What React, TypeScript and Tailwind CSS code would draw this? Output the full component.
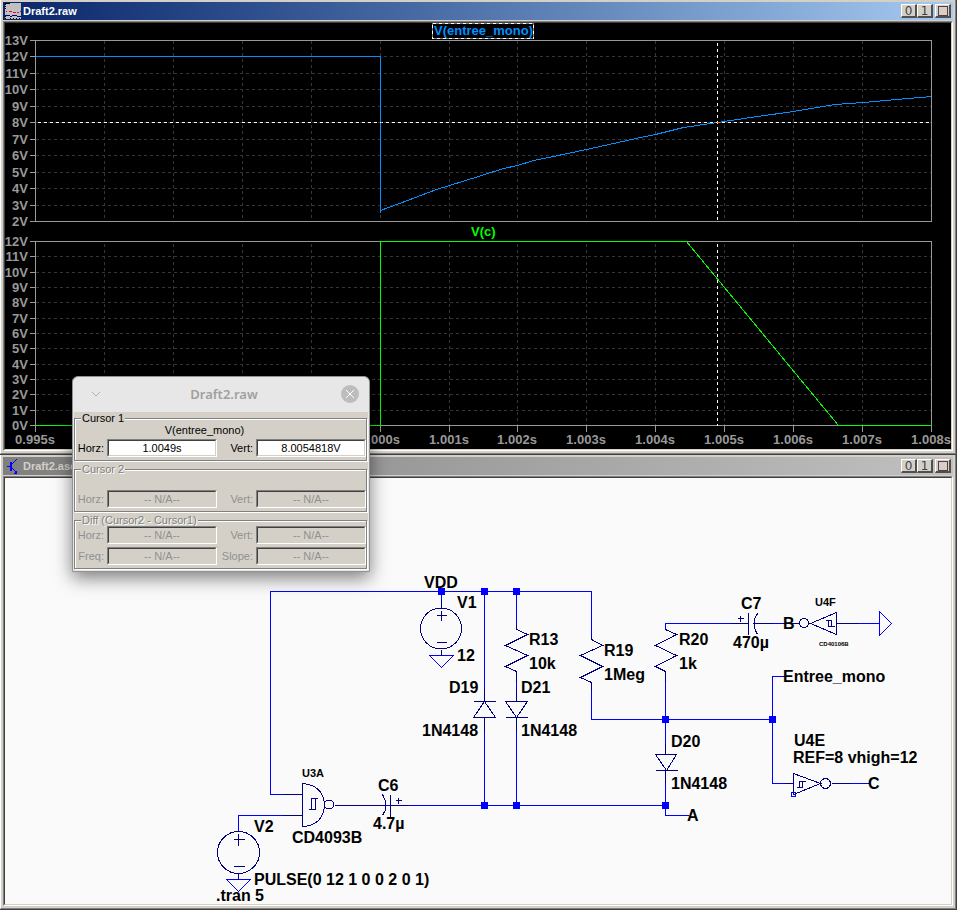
import type { ReactNode } from "react";

const TRACE = "#0090ff";
const AXIS = "#999999";
const GRID = "#363636";

const topTicks = [40, 56, 73, 89, 106, 122, 139, 155, 172, 188, 205, 221];
const bottomTicks = [241, 256, 272, 287, 302, 318, 333, 348, 364, 379, 394, 410, 425];
const timeTicks = [35, 104, 173, 242, 311, 380, 449, 517, 586, 655, 724, 793, 862, 931];

const tracePoints =
  "35,56 380,56 380,212 380,210 407,200 436,189 449,185 478,176 503,168 517,165 533,160 553,156 586,149 640,137 655,134 683,127 717,122 750,117 793,111 835,104 863,102 896,99 931,96";

function CaptionButton({ label, children }: { label: string; children: ReactNode }) {
  return (
    <button
      type="button"
      aria-label={label}
      className="flex h-[14px] w-4 items-center justify-center border-t border-r-2 border-b-2 border-l border-t-white border-r-[#505050] border-b-[#505050] border-l-white bg-[#d4d0c8] font-['DejaVu_Sans',sans-serif] text-[12px] leading-3 text-[#404040]"
    >
      {children}
    </button>
  );
}

function Window({
  title,
  active,
  icon,
  children,
}: {
  title: string;
  active: boolean;
  icon: ReactNode;
  children: ReactNode;
}) {
  return (
    <section className="border-r border-b border-[#404040]">
      <div className="border-r border-b border-l border-r-[#808080] border-b-[#808080] border-l-white bg-[#d4d0c8] p-0.5">
        <header
          className={
            active
              ? "flex h-[18px] items-center bg-linear-to-r from-[#0a246a] to-[#a6caf0] px-0.5 text-white"
              : "flex h-[18px] items-center bg-linear-to-r from-[#808080] to-[#c0c0c0] px-0.5 text-[#d4d0c8]"
          }
        >
          {icon}
          <h1 className="ml-0.5 flex-1 text-[11px] leading-4 font-bold">{title}</h1>
          <div className="flex">
            <CaptionButton label="Minimize">0</CaptionButton>
            <CaptionButton label="Maximize">1</CaptionButton>
            <div className="ml-0.5">
              <CaptionButton label="Close">
                <span className="block size-[10px] border border-[#603a3a]" />
              </CaptionButton>
            </div>
          </div>
        </header>
        <div className="mt-px border-t border-l border-r border-b border-t-[#808080] border-r-white border-b-white border-l-[#808080]">
          <div className="border border-t-[#404040] border-r-[#d4d0c8] border-b-[#d4d0c8] border-l-[#404040]">
            {children}
          </div>
        </div>
      </div>
    </section>
  );
}

function WaveIcon() {
  return (
    <svg viewBox="0 0 16 16" className="size-4" shapeRendering="crispEdges" aria-hidden="true">
      <rect width="16" height="16" fill="#c0c0c0" />
      <path d="M0 0h5v1H0zM0 1h1v1H0zM0 3h1v1H0zM0 5h1v1H0zM0 13h1v1H0zM0 15h1v1H0zM5 15h1v1H5zM8 15h1v1H8zM11 15h1v1h-1zM14 15h1v1h-1z" fill="#000" />
      <path d="M1 8h1v1H1zM4 8h3v1H4zM8 9h3v1H8zM12 9h2v1h-2zM15 8h1v1h-1z" fill="#f00" />
      <path d="M0 12h5v1H0zM5 13h2v1H5zM7 12h5v1H7zM12 13h4v1h-4z" fill="#000080" />
    </svg>
  );
}

function TransistorIcon() {
  return (
    <svg viewBox="0 0 16 16" className="size-4" shapeRendering="crispEdges" aria-hidden="true">
      <g fill="none" stroke="#0000ff">
        <path d="M2 8h4" />
        <path d="M6 4v9" strokeWidth="2" />
        <path d="M6 7l6-6M6 9l6 6" />
      </g>
      <path d="M12 16h-4l4-4z" fill="#0000ff" />
    </svg>
  );
}

function Waveforms() {
  return (
    <svg
      viewBox="5 23 946 426"
      className="block h-auto w-full bg-black font-['Liberation_Sans',Arial,sans-serif] text-[13px] font-bold"
      role="img"
      aria-label="Simulation waveforms"
    >
      <g transform="translate(0.5 0.5)" fill="none" shapeRendering="crispEdges">
        <g stroke={GRID} strokeDasharray="3 3">
          {topTicks.slice(1, -1).map((y) => (
            <path key={y} d={`M35 ${y}H931`} />
          ))}
          {bottomTicks.slice(1, -1).map((y) => (
            <path key={y} d={`M35 ${y}H931`} />
          ))}
          {timeTicks.slice(1, -1).map((x) => (
            <path key={x} d={`M${x} 40V221M${x} 243V425`} />
          ))}
        </g>
        <g stroke={AXIS}>
          <path d="M35 40H931V221H35ZM35 241H931V425H35Z" />
          {[...topTicks, ...bottomTicks].map((y) => (
            <path key={y} d={`M29 ${y}H35`} />
          ))}
          {timeTicks.map((x) => (
            <path key={x} d={`M${x} 425V431`} />
          ))}
        </g>
        <polyline points={tracePoints} stroke={TRACE} />
        <path d="M35 425H380V241H686L838 425H931" stroke="#00ff00" />
        <path d="M37 122H931M717 42V221M717 243V425" stroke="#ffffff" strokeDasharray="3 3" />
        <path d="M432 23H533V38H432Z" stroke="#808080" />
        <path d="M432 23H533V38H432Z" stroke="#ffffff" strokeDasharray="3 3" />
        <path d="M716 122h3M380 122h1" stroke="#ff6f00" />
      </g>
      <g fill={AXIS} textAnchor="end">
        {topTicks.map((y, i) => (
          <text key={y} x="28" y={y + 5}>{`${13 - i}V`}</text>
        ))}
        {bottomTicks.map((y, i) => (
          <text key={y} x="28" y={y + 5}>{`${12 - i}V`}</text>
        ))}
      </g>
      <g fill={AXIS} textAnchor="middle">
        {timeTicks.map((x, i) => (
          <text key={x} x={x} y="444">{`${((995 + i) / 1000).toFixed(3)}s`}</text>
        ))}
      </g>
      <text x="434" y="35" fill={TRACE}>V(entree_mono)</text>
      <text x="471" y="236" fill="#00ff00">V(c)</text>
    </svg>
  );
}

const labels: [number, number, string][] = [
  [424, 588, "VDD"],
  [457, 608, "V1"],
  [457, 661, "12"],
  [449, 693, "D19"],
  [422, 736, "1N4148"],
  [529, 645, "R13"],
  [529, 669, "10k"],
  [521, 693, "D21"],
  [521, 736, "1N4148"],
  [604, 656, "R19"],
  [604, 680, "1Meg"],
  [679, 645, "R20"],
  [679, 669, "1k"],
  [671, 747, "D20"],
  [671, 789, "1N4148"],
  [687, 821, "A"],
  [741, 609, "C7"],
  [733, 648, "470µ"],
  [783, 629, "B"],
  [783, 682, "Entree_mono"],
  [794, 746, "U4E"],
  [793, 763, "REF=8 vhigh=12"],
  [868, 789, "C"],
  [378, 791, "C6"],
  [373, 829, "4.7µ"],
  [292, 843, "CD4093B"],
  [254, 832, "V2"],
  [254, 885, "PULSE(0 12 1 0 0 2 0 1)"],
  [216, 901, ".tran 5"],
];

const junctions: [number, number][] = [
  [441, 591],
  [484, 591],
  [516, 591],
  [484, 805],
  [516, 805],
  [665, 805],
  [665, 719],
  [772, 719],
];

function Schematic() {
  return (
    <svg
      viewBox="5 478 946 426"
      className="block h-auto w-full bg-[#fafafa] font-['Liberation_Sans',Arial,sans-serif] text-[16px] font-bold"
      role="img"
      aria-label="Circuit schematic"
    >
      <g transform="translate(0.5 0.5)" fill="none" shapeRendering="crispEdges">
        <g stroke="#0000ff">
          <path d="M282 794H270V591H591V639M441 591V600M484 591V701M484 717V805M516 591V629M516 671V701M516 717V805" />
          <path d="M591 682V719H772M665 671V754M665 770V815H688M408 805H665" />
          <path d="M665 629V623H730M772 623H790M784 676H772V783H784M850 623H879M840 783H869" />
          <path d="M238 831V815H282M334 805H390" />
          <path d="M429 655H453L441 667ZM226 879H250L238 891ZM879 611V635L891 623Z" />
          <path d="M791 792H795V796H791Z" />
        </g>
        <g stroke="#000080">
          {/* Voltage sources */}
          <circle cx="440.5" cy="628" r="20.5" />
          <path d="M441 600V607M441 649V655M436 615H446M441 610V620M436 642H446" />
          <circle cx="238" cy="852" r="21" />
          <path d="M238 873V879M233 839H244M238 833V845M233 866H244" />
          {/* Resistors */}
          <path d="M516 624V629L527 634L505 645L527 655L505 666L516 671V681" />
          <path d="M591 635V639L602 645L580 655L602 666L580 677L591 682V690" />
          <path d="M665 629L676 634L655 645L676 655L655 666L665 671V681" />
          {/* Diodes */}
          <path d="M484 688V701M473 701H495M484 701L473 717H495ZM484 717V730" />
          <path d="M516 688V701M505 701H527L516 717ZM505 717H527M516 717V730" />
          <path d="M665 742V754M655 754H676L666 770ZM655 770H677M665 770V782" />
          {/* Capacitors */}
          <path d="M730 623H748M748 612V634M757 613Q750 623 757 634M754 623H772M737 618H743M740 615V621" />
          <path d="M356 805H385M382 794Q389 805 382 815M390 794V816M390 805H408M395 800H401M398 797V803" />
          {/* Schmitt NAND gate */}
          <path d="M282 794H302M282 815H302M302 783V826M302 783Q323 785 324 804Q323 825 302 826" />
          <circle cx="328.5" cy="804" r="4.5" />
          <path d="M308 809H315V798M311 809V798H317M334 805H356" />
          {/* Schmitt inverters */}
          <path d="M810 623L836 612V634ZM836 623H857M790 623H799M825 620H831V626M828 620V626H834" />
          <circle cx="803.5" cy="622.5" r="4.5" />
          <path d="M784 783H793M793 773V794L820 783ZM831 783H850M796 787H802V781M799 787V781H805" />
          <circle cx="825" cy="783" r="5" />
        </g>
        <g fill="#0000ff">
          {junctions.map(([x, y]) => (
            <rect key={`${x}-${y}`} x={x - 3.5} y={y - 3.5} width="7" height="7" />
          ))}
        </g>
      </g>
      <g fill="#000000">
        {labels.map(([x, y, text]) => (
          <text key={`${x}-${y}`} x={x} y={y}>
            {text}
          </text>
        ))}
        <g className="text-[11px]">
          <text x="302" y="777">U3A</text>
          <text x="815" y="606">U4F</text>
        </g>
        <text x="819" y="646" className="text-[6px]">CD40106B</text>
      </g>
    </svg>
  );
}

function Field({ id, label, value, disabled }: { id: string; label: string; value: string; disabled?: boolean }) {
  return (
    <div className="flex items-center gap-[3px]">
      <label
        htmlFor={id}
        className={
          disabled ? "min-w-[29px] text-right leading-3 text-[#909090]" : "min-w-[29px] text-right leading-3 text-black"
        }
      >
        {label}
      </label>
      <div className="border border-t-[#808080] border-r-white border-b-white border-l-[#808080]">
        <input
          id={id}
          readOnly
          disabled={disabled}
          defaultValue={value}
          className="block h-4 w-[108px] border border-t-[#404040] border-r-[#d4d0c8] border-b-[#d4d0c8] border-l-[#404040] bg-white text-center text-black outline-none disabled:bg-[#d4d0c8] disabled:text-[#909090]"
        />
      </div>
    </div>
  );
}

function Group({ title, disabled, children }: { title: string; disabled?: boolean; children: ReactNode }) {
  return (
    <fieldset className="min-w-0 border border-[#808080] pb-[3px] shadow-[1px_1px_0_#fff,inset_1px_1px_0_#fff]">
      <legend
        className={
          disabled
            ? "ml-1.5 bg-[#d4d0c8] px-px leading-3 text-[#808080] [text-shadow:1px_1px_0_#fff]"
            : "ml-1.5 bg-[#d4d0c8] px-px leading-3 text-black"
        }
      >
        {title}
      </legend>
      {children}
    </fieldset>
  );
}

function FieldRow({ children }: { children: ReactNode }) {
  return <div className="flex justify-between">{children}</div>;
}

function CursorDialog() {
  return (
    <div
      role="dialog"
      aria-label="Draft2.raw"
      className="absolute top-[376px] left-[72px] w-[298px] overflow-hidden rounded-t-md border border-[#929292] bg-[#e7e7e7] text-[11px] shadow-[0_6px_18px_rgba(0,0,0,0.5)]"
    >
      <header className="flex h-[35px] items-center pr-2.5 pb-px pl-[18px]">
        <button type="button" aria-label="Roll up" className="flex size-[10px] items-center justify-center">
          <svg viewBox="0 0 10 10" className="size-[10px]" fill="none" stroke="#b0b0b0" aria-hidden="true">
            <path d="M1 3l4 4 4-4" />
          </svg>
        </button>
        <h2 className="flex-1 pl-1.5 text-center font-['Noto_Sans',sans-serif] text-[13px] leading-4 font-semibold text-[#a0a0a0]">
          Draft2.raw
        </h2>
        <button type="button" aria-label="Close" className="size-[18px]">
          <svg viewBox="0 0 18 18" className="size-[18px]" aria-hidden="true">
            <circle cx="9" cy="9" r="9" fill="#bdbdbd" />
            <path d="M5 5l8 8M13 5l-8 8" stroke="#fff" />
          </svg>
        </button>
      </header>
      <div className="mx-px mb-px flex flex-col gap-0.5 bg-[#d4d0c8] pr-px pb-px">
        <Group title="Cursor 1">
          <p className="mb-[3px] pr-8 text-center leading-3 text-black">V(entree_mono)</p>
          <FieldRow>
            <Field id="c1-horz" label="Horz:" value="1.0049s" />
            <Field id="c1-vert" label="Vert:" value="8.0054818V" />
          </FieldRow>
        </Group>
        <Group title="Cursor 2" disabled>
          <div className="h-[15px]" />
          <FieldRow>
            <Field id="c2-horz" label="Horz:" value="-- N/A--" disabled />
            <Field id="c2-vert" label="Vert:" value="-- N/A--" disabled />
          </FieldRow>
        </Group>
        <Group title="Diff (Cursor2 - Cursor1)" disabled>
          <div className="flex flex-col gap-[3px]">
            <FieldRow>
              <Field id="diff-horz" label="Horz:" value="-- N/A--" disabled />
              <Field id="diff-vert" label="Vert:" value="-- N/A--" disabled />
            </FieldRow>
            <FieldRow>
              <Field id="diff-freq" label="Freq:" value="-- N/A--" disabled />
              <Field id="diff-slope" label="Slope:" value="-- N/A--" disabled />
            </FieldRow>
          </div>
        </Group>
      </div>
    </div>
  );
}

export default function App() {
  return (
    <main className="relative flex flex-col bg-[#d4d0c8] font-['Liberation_Sans',Arial,sans-serif]">
      <Window title="Draft2.raw" active icon={<WaveIcon />}>
        <Waveforms />
      </Window>
      <Window title="Draft2.asc" active={false} icon={<TransistorIcon />}>
        <Schematic />
      </Window>
      <CursorDialog />
    </main>
  );
}
